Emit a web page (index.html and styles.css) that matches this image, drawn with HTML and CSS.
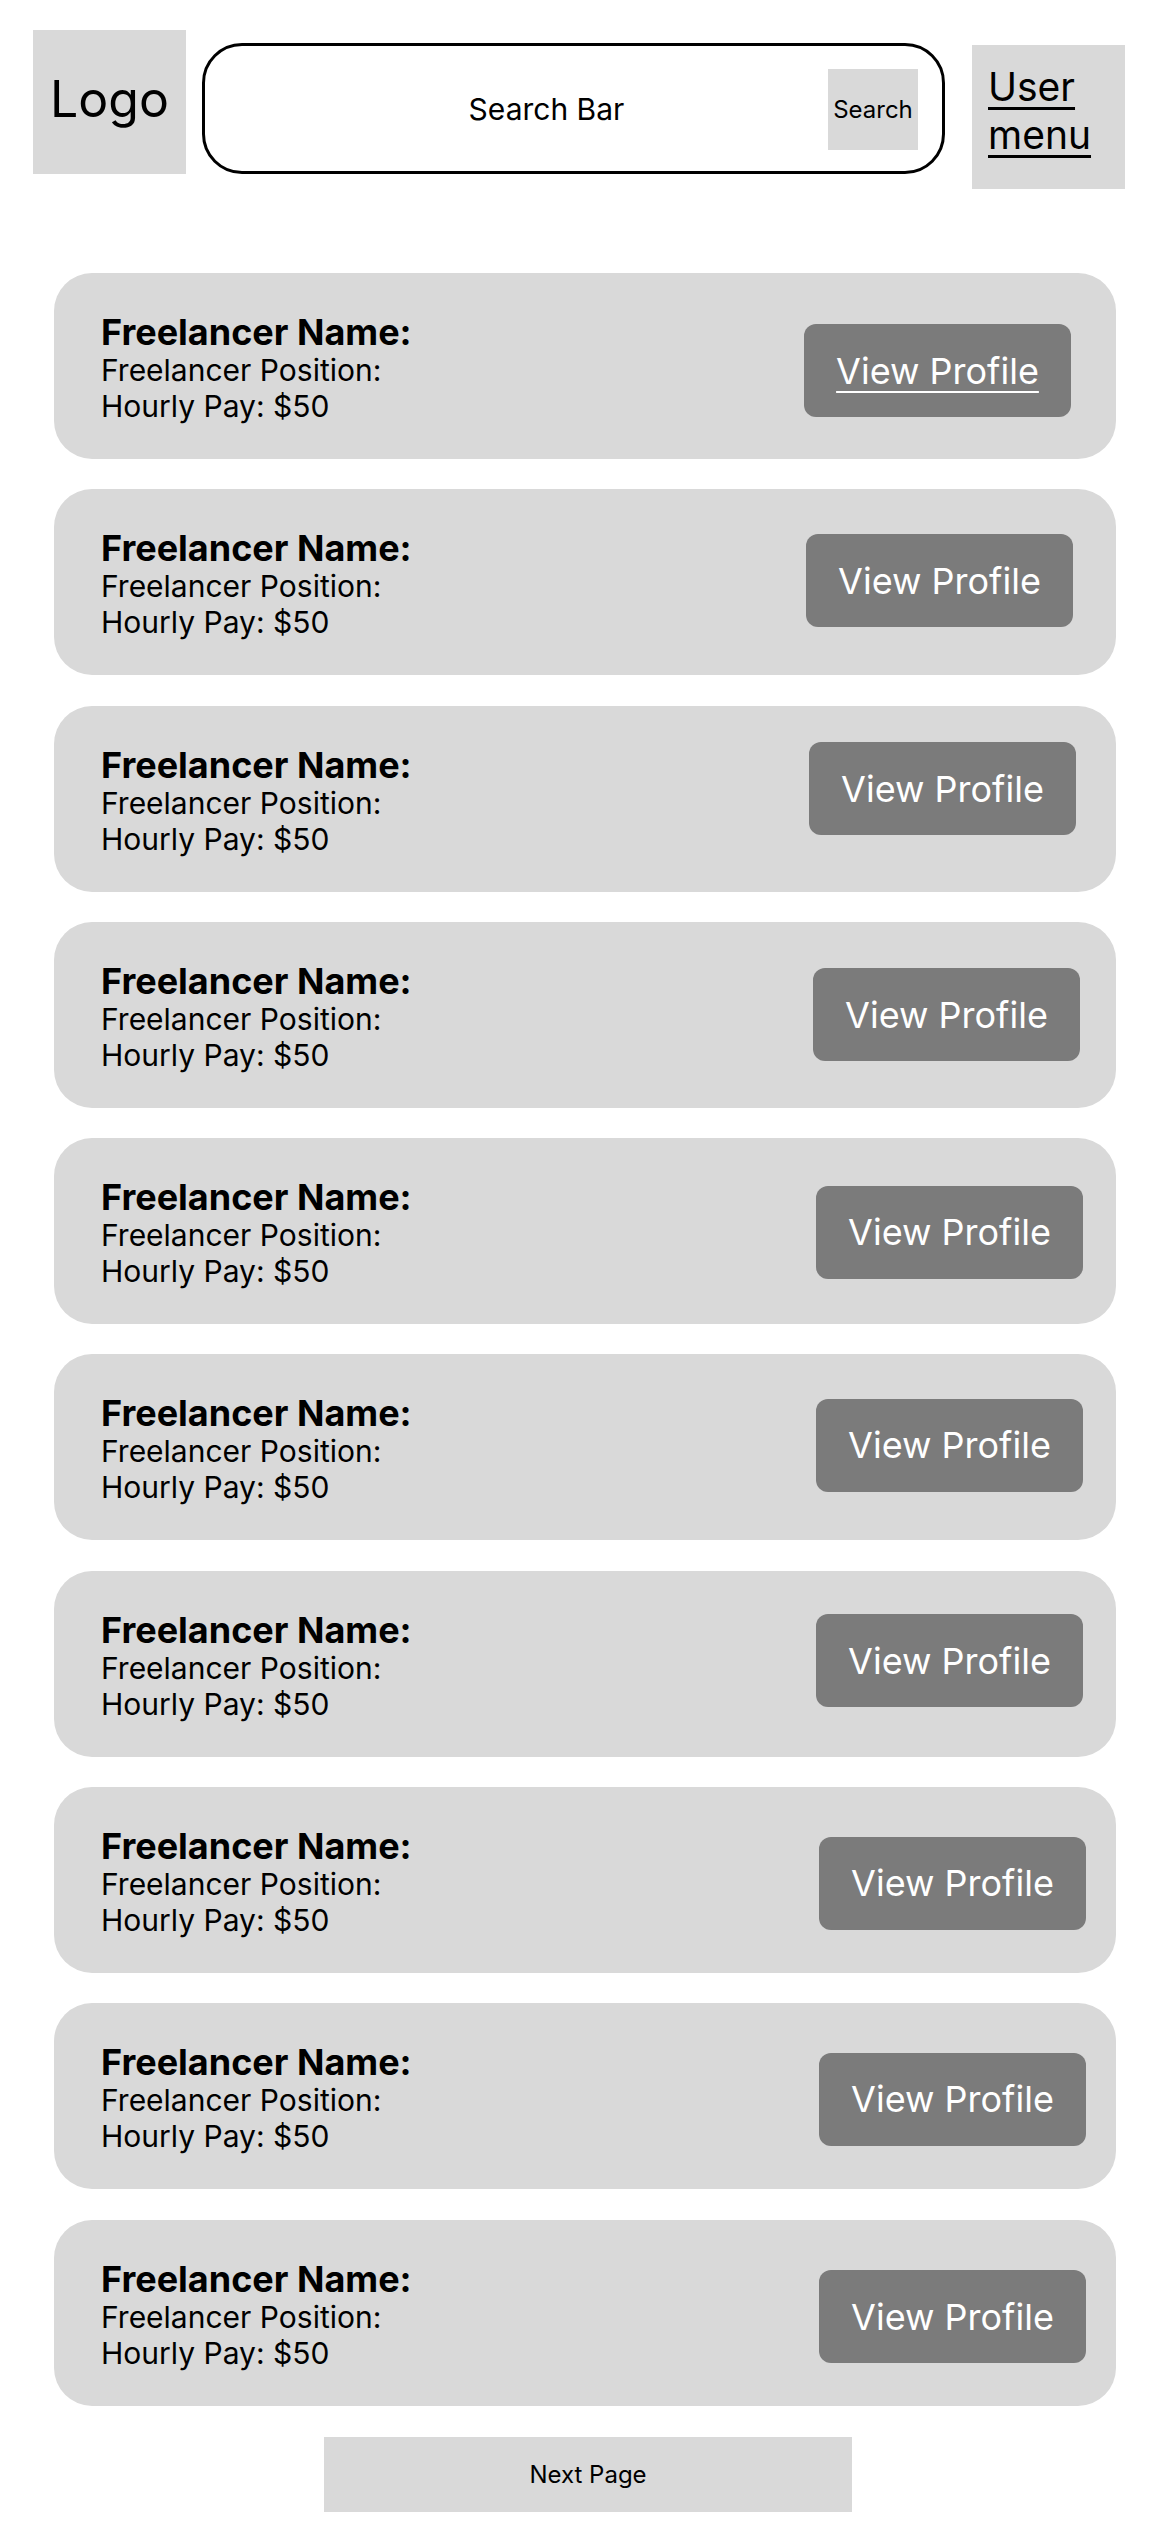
FILE: index.html
```html
<!DOCTYPE html>
<html lang="en">
<head>
<meta charset="utf-8">
<title>Freelancers</title>
<link rel="stylesheet" href="styles.css">
</head>
<body>
<header class="header">
  <div class="logo">Logo</div>
  <div class="search">
    <span class="search-text">Search Bar</span>
    <button class="search-btn">Search</button>
  </div>
  <div class="user-menu"><a class="user-link" href="#">User<br>menu</a></div>
</header>
<main class="list">
  <div class="card"><div class="info"><div class="name">Freelancer Name:</div><div class="line">Freelancer Position:</div><div class="line">Hourly Pay: $50</div></div><a class="view-btn view-btn--link" href="#">View Profile</a></div>
  <div class="card"><div class="info"><div class="name">Freelancer Name:</div><div class="line">Freelancer Position:</div><div class="line">Hourly Pay: $50</div></div><span class="view-btn">View Profile</span></div>
  <div class="card"><div class="info"><div class="name">Freelancer Name:</div><div class="line">Freelancer Position:</div><div class="line">Hourly Pay: $50</div></div><span class="view-btn">View Profile</span></div>
  <div class="card"><div class="info"><div class="name">Freelancer Name:</div><div class="line">Freelancer Position:</div><div class="line">Hourly Pay: $50</div></div><span class="view-btn">View Profile</span></div>
  <div class="card"><div class="info"><div class="name">Freelancer Name:</div><div class="line">Freelancer Position:</div><div class="line">Hourly Pay: $50</div></div><span class="view-btn">View Profile</span></div>
  <div class="card"><div class="info"><div class="name">Freelancer Name:</div><div class="line">Freelancer Position:</div><div class="line">Hourly Pay: $50</div></div><span class="view-btn">View Profile</span></div>
  <div class="card"><div class="info"><div class="name">Freelancer Name:</div><div class="line">Freelancer Position:</div><div class="line">Hourly Pay: $50</div></div><span class="view-btn">View Profile</span></div>
  <div class="card"><div class="info"><div class="name">Freelancer Name:</div><div class="line">Freelancer Position:</div><div class="line">Hourly Pay: $50</div></div><span class="view-btn">View Profile</span></div>
  <div class="card"><div class="info"><div class="name">Freelancer Name:</div><div class="line">Freelancer Position:</div><div class="line">Hourly Pay: $50</div></div><span class="view-btn">View Profile</span></div>
  <div class="card"><div class="info"><div class="name">Freelancer Name:</div><div class="line">Freelancer Position:</div><div class="line">Hourly Pay: $50</div></div><span class="view-btn">View Profile</span></div>
</main>
<div class="pager"><button class="next-btn">Next Page</button></div>
</body>
</html>
```

FILE: styles.css
```css
* { box-sizing: border-box; }

html, body {
  margin: 0;
  padding: 0;
  background: #ffffff;
}

body {
  width: 1170px;
  min-height: 2532px;
  font-family: "Inter", "Noto Sans", "Liberation Sans", sans-serif;
  color: #000000;
}

/* Header */
.header {
  display: flex;
  align-items: flex-start;
  padding: 30px 0 0 33px;
}

.logo {
  width: 153px;
  height: 144px;
  background: #d9d9d9;
  display: flex;
  align-items: center;
  justify-content: center;
  padding-bottom: 6px;
  font-size: 50px;
  line-height: 1.21;
}

.search {
  margin-left: 16px;
  margin-top: 13px;
  width: 743px;
  height: 131px;
  border: 3px solid #000000;
  border-radius: 40px;
  display: flex;
  align-items: center;
  padding-right: 24px;
}

.search-text {
  flex: 1;
  text-align: center;
  padding-left: 60px;
  font-size: 30px;
}

.search-btn {
  width: 90px;
  height: 81px;
  margin-top: 2px;
  border: none;
  background: #d9d9d9;
  font-family: inherit;
  font-size: 24px;
  color: #000000;
  padding: 0;
}

.user-menu {
  margin-left: 27px;
  margin-top: 15px;
  width: 153px;
  height: 144px;
  background: #d9d9d9;
  padding: 18px 0 0 16px;
}

.user-link {
  color: #000000;
  font-size: 39px;
  line-height: 48px;
  text-decoration: underline;
  text-decoration-thickness: 3px;
  text-underline-offset: 6px;
}

/* Cards */
.list {
  display: flex;
  flex-direction: column;
  gap: 30.3px;
  margin: 84px 54px 0 54px;
}

.card {
  height: 186px;
  background: #d9d9d9;
  border-radius: 38px;
  display: flex;
  align-items: center;
  justify-content: space-between;
  padding: 4px 30px 0 47px;
}

.name {
  font-size: 36px;
  font-weight: 700;
  line-height: 40px;
}

.line {
  font-size: 30px;
  line-height: 36px;
}

.view-btn {
  width: 267px;
  height: 93px;
  border-radius: 12px;
  background: #7b7b7b;
  color: #ffffff;
  font-size: 36px;
  display: flex;
  align-items: center;
  justify-content: center;
  text-decoration: none;
}

.view-btn--link {
  text-decoration: underline;
  text-decoration-thickness: 2px;
  text-underline-offset: 7px;
}

.card:nth-child(1) .view-btn { margin-right: 15px; margin-top: 5px; }
.card:nth-child(2) .view-btn { margin-right: 13px; margin-bottom: 7px; }
.card:nth-child(3) .view-btn { margin-right: 10px; margin-bottom: 24px; }
.card:nth-child(4) .view-btn { margin-right: 6px; margin-bottom: 4px; }
.card:nth-child(5) .view-btn { margin-right: 3px; margin-bottom: 2px; }
.card:nth-child(6) .view-btn { margin-right: 3px; margin-bottom: 8px; }
.card:nth-child(7) .view-btn { margin-right: 3px; margin-bottom: 10px; }
.card:nth-child(8) .view-btn { margin-right: 0; margin-top: 2px; }
.card:nth-child(9) .view-btn { margin-right: 0; margin-top: 2px; }
.card:nth-child(10) .view-btn { margin-right: 0; margin-top: 4px; }

/* Pager */
.pager {
  display: flex;
  justify-content: center;
  padding: 31px 0 0 6px;
}

.next-btn {
  width: 528px;
  height: 75px;
  border: none;
  background: #d9d9d9;
  font-family: inherit;
  font-size: 24px;
  color: #000000;
  padding: 0;
}
```
